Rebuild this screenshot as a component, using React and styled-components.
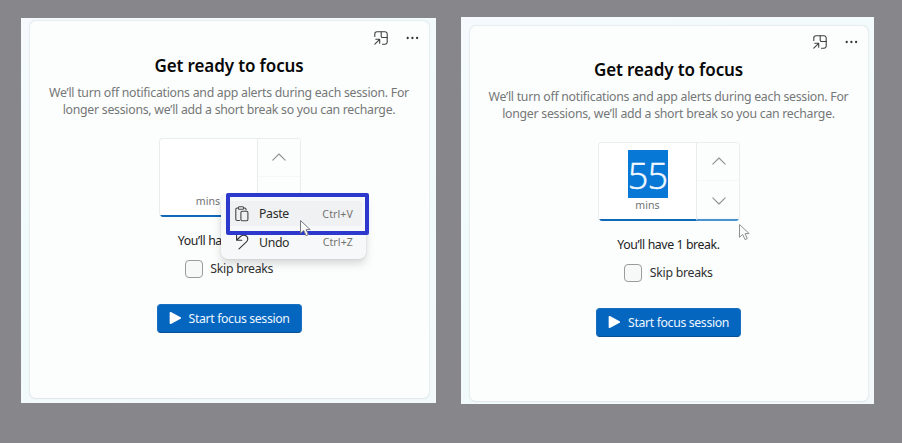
import React from "react";
import styled, { createGlobalStyle } from "styled-components";

const GlobalStyle = createGlobalStyle`
  * { box-sizing: border-box; }
  body { margin: 0; background: #86868b; font-family: "Noto Sans", "Open Sans", sans-serif; }
`;

const Page = styled.main`
  display: flex;
  align-items: flex-start;
  gap: 25px;
  width: 902px;
  height: 443px;
  padding: 17px 0 0 21px;
  background: #86868b;
  overflow: hidden;
`;

const Panel = styled.section`
  width: ${(p) => p.$width}px;
  height: ${(p) => p.$height}px;
  margin-top: ${(p) => p.$top}px;
  padding: ${(p) => p.$inset}px ${(p) => p.$right}px 0 8px;
  background: linear-gradient(160deg, #f6fafe, #f1fbfb 50%, #f3f9fb);
`;

const Card = styled.div`
  position: relative;
  display: flex;
  flex-direction: column;
  align-items: center;
  height: ${(p) => p.$height}px;
  padding-right: 1px;
  border: 1px solid #e6eef0;
  border-bottom-color: #e3e9ea;
  border-radius: 7px;
  background: #fcfefe;
  box-shadow: 0 0 1px #dfe9ec;
`;

const Toolbar = styled.div`
  display: flex;
  align-self: stretch;
  justify-content: flex-end;
  align-items: center;
  gap: 18.5px;
  height: 16px;
  margin-top: ${(p) => p.$top}px;
  padding-right: 9px;
`;

const Title = styled.h1`
  margin: 9px 0 0;
  height: 22px;
  font-size: 17px;
  font-weight: 600;
  line-height: 22px;
  letter-spacing: -0.12px;
  white-space: nowrap;
  color: #080808;
`;

const Description = styled.p`
  margin: 8px 0 0;
  text-align: center;
  font-size: 12.3px;
  line-height: 16.5px;
  letter-spacing: -0.265px;
  white-space: nowrap;
  color: #757777;
`;

const Picker = styled.div`
  position: relative;
  display: flex;
  flex: none;
  width: 142px;
  height: 79px;
  margin-top: 20px;
  margin-left: 1px;
  border: 1px solid #ebeded;
  border-bottom: 0;
  border-radius: 4px;
  overflow: hidden;
  background: #fff;
`;

const Value = styled.div`
  display: flex;
  flex-direction: column;
  align-items: center;
  width: 98px;
  border-right: 1px solid #e9ebec;
  border-bottom: 2px solid #1068b8;
`;

const Minutes = styled.div`
  flex: none;
  width: 40px;
  height: 48px;
  margin-top: 7px;
  text-align: center;
  font-family: "Open Sans", sans-serif;
  font-size: 36px;
  font-weight: 300;
  line-height: 51px;
  letter-spacing: -0.7px;
  -webkit-text-stroke: 0.5px #f4faff;
  color: #f4faff;
  background: ${(p) => (p.$selected ? "#0878d7" : "transparent")};
`;

const Unit = styled.span`
  font-size: 10.6px;
  line-height: 15px;
  letter-spacing: 0;
  color: #707373;
`;

const Steppers = styled.div`
  display: grid;
  grid-template-rows: 38px 38px;
  flex: 1;
  border-bottom: 2px solid #4b92d0;
  background: #fcfdfd;
`;

const Stepper = styled.button`
  display: flex;
  align-items: center;
  justify-content: center;
  padding: ${(p) => (p.$down ? "2px 0 0 1px" : "0 0 2px 1px")};
  border: 0;
  border-bottom: 1px solid #f6f8f8;
  background: transparent;
`;

const BreakNote = styled.div`
  height: 18px;
  margin-top: 15px;
  font-size: 12.3px;
  line-height: 18px;
  letter-spacing: -0.4px;
  white-space: nowrap;
  color: #222;
`;

const SkipRow = styled.label`
  display: flex;
  align-items: center;
  gap: 7.5px;
  height: 18px;
  margin-top: 10px;
  font-size: 12.3px;
  line-height: 16px;
  letter-spacing: -0.28px;
  white-space: nowrap;
  color: #303030;
`;

const Checkbox = styled.span`
  width: 18px;
  height: 18px;
  border: 1px solid #9a9c9c;
  border-radius: 4px;
  background: #f7f9f9;
`;

const StartButton = styled.button`
  display: flex;
  align-items: center;
  flex: none;
  gap: 7px;
  width: 145px;
  height: 29px;
  margin-top: 26px;
  padding: 0 0 1px 11px;
  border: 1px solid #1a70c0;
  border-bottom-color: #0a4f92;
  border-radius: 4px;
  background: #0566c0;
  font-family: inherit;
  font-size: 12.3px;
  letter-spacing: -0.36px;
  white-space: nowrap;
  color: #eef7ff;
`;

const Menu = styled.div`
  position: absolute;
  left: 191px;
  top: 173px;
  width: 145px;
  height: 65px;
  padding: 7px 4px 0;
  border-radius: 7px;
  background: #f7f8f9;
  box-shadow: 0 5px 9px rgba(0, 0, 0, 0.15), 0 0 2px rgba(0, 0, 0, 0.12);
`;

const MenuItem = styled.div`
  display: grid;
  grid-template-columns: 24px 1fr auto;
  align-items: center;
  height: ${(p) => (p.$active ? 25 : 32)}px;
  padding: 0 9px 0 10px;
  border-radius: 3px;
  background: ${(p) => (p.$active ? "#f0f1f2" : "transparent")};
  font-size: 12.3px;
  letter-spacing: -0.35px;
  color: #2b2b2b;
`;

const Shortcut = styled.span`
  font-size: 10.6px;
  letter-spacing: 0.1px;
  color: #727272;
`;

const Highlight = styled.div`
  position: absolute;
  left: 196px;
  top: 172px;
  width: 143px;
  height: 42px;
  border: 4px solid #2c39cc;
  border-radius: 2px;
`;

const PointerIcon = styled.svg`
  position: absolute;
  left: ${(p) => p.$x}px;
  top: ${(p) => p.$y}px;
`;

const Pointer = ({ x, y, light }) => (
  <PointerIcon $x={x} $y={y} width="13" height="19" viewBox="0 0 13 19">
    <path
      d="M1.5 1.5V14.3L4.7 11.4L7 16.6L9.3 15.6L7.1 10.6H11.2Z"
      fill="#fafafa"
      stroke={light ? "#8d8f91" : "#777a7f"}
      strokeWidth="1"
      strokeLinejoin="round"
    />
  </PointerIcon>
);

const CompactIcon = () => (
  <svg width="14" height="14" viewBox="0 0 14 14" fill="none" stroke="#3f4242" strokeWidth="1.1" strokeLinecap="round" strokeLinejoin="round">
    <path d="M.8 5.5V3A2.2 2.2 0 0 1 3 .8H11A2.2 2.2 0 0 1 13.2 3V11A2.2 2.2 0 0 1 11 13.2H8.5" />
    <path d="M7.2 .8V5.2A1.3 1.3 0 0 0 8.5 6.5H13.2" />
    <path d="M.8 13.2L5.7 8.3M1.8 8.3H5.7V12.2" />
  </svg>
);

const MoreIcon = () => (
  <svg width="13" height="4" viewBox="0 0 13 4" fill="#333">
    <circle cx="1.7" cy="2" r="1.15" />
    <circle cx="6.4" cy="2" r="1.15" />
    <circle cx="11.1" cy="2" r="1.15" />
  </svg>
);

const Chevron = ({ down }) => (
  <svg width="14" height="8" viewBox="0 0 14 8" fill="none" stroke="#909393" strokeWidth="1.1" strokeLinecap="round" strokeLinejoin="round">
    <path d={down ? "M.8 .8L7 7L13.2 .8" : "M.8 7.2L7 1L13.2 7.2"} />
  </svg>
);

const PlayIcon = () => (
  <svg width="13" height="14" viewBox="0 0 13 14">
    <path d="M1.5 1.8L11.2 7L1.5 12.2Z" fill="#fff" stroke="#fff" strokeWidth="1.7" strokeLinejoin="round" />
  </svg>
);

const PasteIcon = () => (
  <svg width="14" height="16" viewBox="0 0 14 16" fill="none" stroke="#454646" strokeWidth="1.1" strokeLinejoin="round" strokeLinecap="round">
    <path d="M4.5 14.5H2.2A1.3 1.3 0 0 1 .8 13.2V3.3A1.3 1.3 0 0 1 2.2 2H3.2M8.8 2H9.7A1.3 1.3 0 0 1 11 3.3V4" />
    <rect x="3.3" y=".8" width="5.4" height="2.5" rx="1.1" />
    <rect x="5.9" y="5.2" width="7" height="9.5" rx="1.2" />
  </svg>
);

const UndoIcon = () => (
  <svg width="14" height="16" viewBox="0 0 14 16" fill="none" stroke="#333" strokeWidth="1.1" strokeLinejoin="round" strokeLinecap="round">
    <path d="M1.6 1.2V6.2H6.8M1.8 6L5.5 2.5C8.3 .1 12.8 1.5 12.8 5C12.8 6.5 12 7.4 11.2 8.2L4 14.8" />
  </svg>
);

const FocusPanel = ({ width, height, top, inset, right, cardHeight, toolbarTop, minutes, children }) => (
  <Panel $width={width} $height={height} $top={top} $inset={inset} $right={right}>
    <Card $height={cardHeight}>
      <Toolbar $top={toolbarTop}>
        <CompactIcon />
        <MoreIcon />
      </Toolbar>
      <Title>Get ready to focus</Title>
      <Description>
        We’ll turn off notifications and app alerts during each session. For
        <br />
        longer sessions, we’ll add a short break so you can recharge.
      </Description>
      <Picker>
        <Value>
          <Minutes $selected={Boolean(minutes)}>{minutes}</Minutes>
          <Unit>mins</Unit>
        </Value>
        <Steppers>
          <Stepper aria-label="Increase"><Chevron /></Stepper>
          <Stepper aria-label="Decrease" $down><Chevron down /></Stepper>
        </Steppers>
      </Picker>
      <BreakNote>You’ll have 1 break.</BreakNote>
      <SkipRow><Checkbox />Skip breaks</SkipRow>
      <StartButton><PlayIcon />Start focus session</StartButton>
      {children}
    </Card>
  </Panel>
);

export default function App() {
  return (
    <>
      <GlobalStyle />
      <Page>
        <FocusPanel width={415} height={385} top={1} inset={2} right={6} cardHeight={379} toolbarTop={9}>
          <Menu>
            <MenuItem $active><PasteIcon />Paste<Shortcut>Ctrl+V</Shortcut></MenuItem>
            <MenuItem><UndoIcon />Undo<Shortcut>Ctrl+Z</Shortcut></MenuItem>
          </Menu>
          <Highlight />
          <Pointer x={269} y={198} />
        </FocusPanel>
        <FocusPanel width={413} height={387} top={0} inset={8} right={5} cardHeight={377} toolbarTop={8} minutes="55">
          <Pointer x={268} y={197} light />
        </FocusPanel>
      </Page>
    </>
  );
}
